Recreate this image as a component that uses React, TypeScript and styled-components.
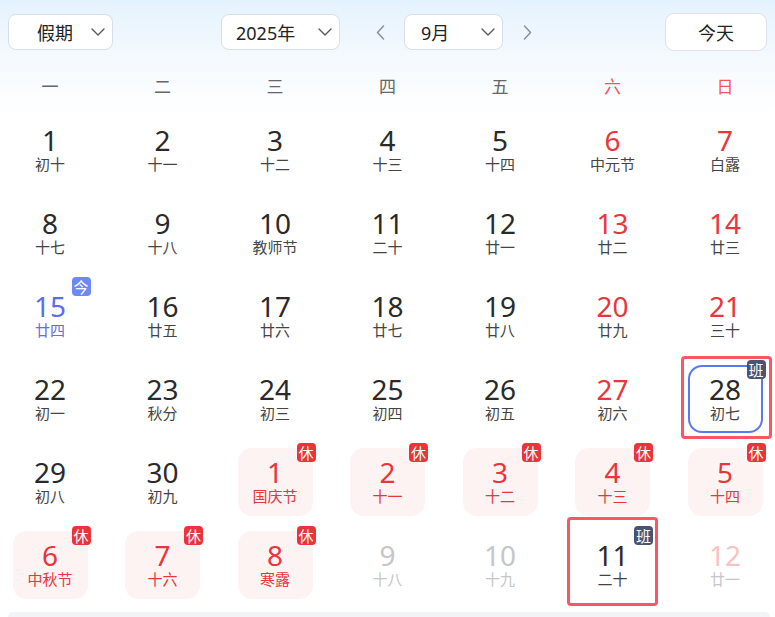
import React from "react";
import styled, { createGlobalStyle } from "styled-components";

const GlobalStyle = createGlobalStyle`
  html, body { margin: 0; padding: 0; background: #ffffff; }
  body {
    font-family: "Noto Sans", "Noto Sans CJK SC", sans-serif;
    color: #333333;
    -webkit-font-smoothing: antialiased;
  }
  * { box-sizing: border-box; }
`;

const Page = styled.div`
  width: 775px;
  height: 617px;
  overflow: hidden;
  background: #ffffff;
  display: flex;
  flex-direction: column;
`;

const Top = styled.div`
  background: linear-gradient(180deg, #e4f2fd 0%, #f3f9fe 45%, #ffffff 100%);
  padding-top: 13px;
`;

const Toolbar = styled.div`
  display: flex;
  align-items: center;
  padding: 0 8px;
  height: 38px;
`;

const Select = styled.div<{ $w: number; $pl: number; $ml?: number }>`
  width: ${(p) => p.$w}px;
  height: 36px;
  margin-left: ${(p) => p.$ml ?? 0}px;
  background: #ffffff;
  border: 1px solid #d9dde4;
  border-radius: 8px;
  display: flex;
  align-items: center;
  padding-left: ${(p) => p.$pl}px;
  padding-right: 7px;
  font-size: 18px;
  color: #222222;
  font-family: "Noto Sans", "Noto Sans CJK SC", sans-serif;
`;

const SelectText = styled.span`
  flex: 1;
`;

const MiddleGroup = styled.div`
  display: flex;
  align-items: center;
  margin-left: 108px;
`;

const ArrowButton = styled.div<{ $ml: number }>`
  width: 24px;
  height: 36px;
  margin-left: ${(p) => p.$ml}px;
  display: flex;
  align-items: center;
  justify-content: center;
`;

const TodayButton = styled.div`
  margin-left: auto;
  width: 102px;
  height: 38px;
  background: #ffffff;
  border: 1px solid #dfe2e8;
  border-radius: 9px;
  display: flex;
  align-items: center;
  justify-content: center;
  font-size: 18px;
  color: #222222;
`;

const DaysGrid = styled.div`
  display: grid;
  grid-template-columns: repeat(7, 75px);
  column-gap: 37.5px;
  padding: 0 12.5px;
`;

const WeekRow = styled(DaysGrid)`
  height: 65px;
  align-items: center;
  padding-top: 4px;
`;

const WeekLabel = styled.div<{ $weekend?: boolean }>`
  text-align: center;
  font-size: 17px;
  color: ${(p) => (p.$weekend ? "#f2545b" : "#666666")};
`;

const MonthGrid = styled(DaysGrid)`
  row-gap: 15px;
  grid-auto-rows: 68px;
`;

type Tone = "normal" | "weekend" | "holiday" | "today" | "faded" | "fadedWeekend";

const numberColor: Record<Tone, string> = {
  normal: "#2a2a2a",
  weekend: "#e8363c",
  holiday: "#e8363c",
  today: "#5a6cf2",
  faded: "#c6c6c6",
  fadedWeekend: "#f8c3c3",
};

const lunarColor: Record<Tone, string> = {
  normal: "#444444",
  weekend: "#444444",
  holiday: "#e8363c",
  today: "#6b6aee",
  faded: "#c6c6c6",
  fadedWeekend: "#c6c6c6",
};

const Cell = styled.div<{ $holiday?: boolean; $selected?: boolean }>`
  position: relative;
  display: flex;
  flex-direction: column;
  align-items: center;
  justify-content: center;
  border-radius: 14px;
  background: ${(p) => (p.$holiday ? "#fdf3f2" : "transparent")};
  border: 2px solid ${(p) => (p.$selected ? "#5b78ef" : "transparent")};
  padding-bottom: 2px;
`;

const DayNumber = styled.div<{ $tone: Tone }>`
  font-size: 28px;
  line-height: 29px;
  height: 29px;
  color: ${(p) => numberColor[p.$tone]};
  font-family: "Noto Sans", "Noto Sans CJK SC", sans-serif;
`;

const Lunar = styled.div<{ $tone: Tone }>`
  font-size: 15px;
  line-height: 18px;
  color: ${(p) => lunarColor[p.$tone]};
  font-family: "Noto Sans CJK SC", sans-serif;
  white-space: nowrap;
`;

type BadgeKind = "rest" | "work" | "today";
const badgeBg: Record<BadgeKind, string> = {
  rest: "#e8343a",
  work: "#4a5371",
  today: "#6d88f7",
};

const Badge = styled.span<{ $kind: BadgeKind }>`
  position: absolute;
  top: -7px;
  right: -5px;
  width: 19px;
  height: 19px;
  border-radius: 4px;
  background: ${(p) => badgeBg[p.$kind]};
  color: #ffffff;
  font-size: 15px;
  line-height: 19px;
  text-align: center;
  font-family: "Noto Sans CJK SC", sans-serif;
`;

const Frame = styled.span<{ $l: number; $r: number; $t: number; $b: number }>`
  position: absolute;
  left: ${(p) => -p.$l}px;
  right: ${(p) => -p.$r}px;
  top: ${(p) => -p.$t}px;
  bottom: ${(p) => -p.$b}px;
  border: 3px solid #fd5466;
  border-radius: 4px;
  pointer-events: none;
`;

const BottomPanel = styled.div`
  margin: 13px 5px 0 8px;
  height: 30px;
  background: #f3f4f8;
  border-radius: 10px 10px 0 0;
`;

const Chevron = () => (
  <svg width="14" height="8" viewBox="0 0 14 8" fill="none">
    <polyline points="1,1 7,7 13,1" stroke="#55595f" strokeWidth="1.4" strokeLinecap="round" strokeLinejoin="round" />
  </svg>
);

const ArrowLeft = () => (
  <svg width="9" height="15" viewBox="0 0 9 15" fill="none">
    <polyline points="7.5,1 1.5,7.5 7.5,14" stroke="#8a909a" strokeWidth="1.5" strokeLinecap="round" strokeLinejoin="round" />
  </svg>
);

const ArrowRight = () => (
  <svg width="9" height="15" viewBox="0 0 9 15" fill="none">
    <polyline points="1.5,1 7.5,7.5 1.5,14" stroke="#8a909a" strokeWidth="1.5" strokeLinecap="round" strokeLinejoin="round" />
  </svg>
);

type Day = {
  n: number;
  l: string;
  tone: Tone;
  holiday?: boolean;
  selected?: boolean;
  badge?: BadgeKind;
  frame?: [number, number, number, number];
};

const d = (n: number, l: string, tone: Tone = "normal", extra: Partial<Day> = {}): Day => ({ n, l, tone, ...extra });
const hol = (n: number, l: string): Day => ({ n, l, tone: "holiday", holiday: true, badge: "rest" });

const days: Day[] = [
  d(1, "初十"), d(2, "十一"), d(3, "十二"), d(4, "十三"), d(5, "十四"), d(6, "中元节", "weekend"), d(7, "白露", "weekend"),
  d(8, "十七"), d(9, "十八"), d(10, "教师节"), d(11, "二十"), d(12, "廿一"), d(13, "廿二", "weekend"), d(14, "廿三", "weekend"),
  d(15, "廿四", "today", { badge: "today" }), d(16, "廿五"), d(17, "廿六"), d(18, "廿七"), d(19, "廿八"), d(20, "廿九", "weekend"), d(21, "三十", "weekend"),
  d(22, "初一"), d(23, "秋分"), d(24, "初三"), d(25, "初四"), d(26, "初五"), d(27, "初六", "weekend"),
  d(28, "初七", "normal", { selected: true, badge: "work", frame: [9, 11, 11, 8] }),
  d(29, "初八"), d(30, "初九"), hol(1, "国庆节"), hol(2, "十一"), hol(3, "十二"), hol(4, "十三"), hol(5, "十四"),
  hol(6, "中秋节"), hol(7, "十六"), hol(8, "寒露"), d(9, "十八", "faded"), d(10, "十九", "faded"),
  d(11, "二十", "normal", { badge: "work", frame: [10, 10, 16, 9] }),
  d(12, "廿一", "fadedWeekend"),
];

const weekdays = ["一", "二", "三", "四", "五", "六", "日"];

export default function App() {
  return (
    <Page>
      <GlobalStyle />
      <Top>
        <Toolbar>
          <Select $w={105} $pl={28}>
            <SelectText>假期</SelectText>
            <Chevron />
          </Select>
          <MiddleGroup>
            <Select $w={119} $pl={14}>
              <SelectText>2025年</SelectText>
              <Chevron />
            </Select>
            <ArrowButton $ml={28}>
              <ArrowLeft />
            </ArrowButton>
            <Select $w={99} $pl={16} $ml={12}>
              <SelectText>9月</SelectText>
              <Chevron />
            </Select>
            <ArrowButton $ml={12}>
              <ArrowRight />
            </ArrowButton>
          </MiddleGroup>
          <TodayButton>今天</TodayButton>
        </Toolbar>
        <WeekRow>
          {weekdays.map((w, i) => (
            <WeekLabel key={w} $weekend={i >= 5}>
              {w}
            </WeekLabel>
          ))}
        </WeekRow>
      </Top>
      <MonthGrid>
        {days.map((day, i) => (
          <Cell key={i} $holiday={day.holiday} $selected={day.selected}>
            <DayNumber $tone={day.tone}>{day.n}</DayNumber>
            <Lunar $tone={day.tone}>{day.l}</Lunar>
            {day.badge && (
              <Badge $kind={day.badge}>
                {day.badge === "rest" ? "休" : day.badge === "work" ? "班" : "今"}
              </Badge>
            )}
            {day.frame && <Frame $l={day.frame[0]} $r={day.frame[1]} $t={day.frame[2]} $b={day.frame[3]} />}
          </Cell>
        ))}
      </MonthGrid>
      <BottomPanel />
    </Page>
  );
}
